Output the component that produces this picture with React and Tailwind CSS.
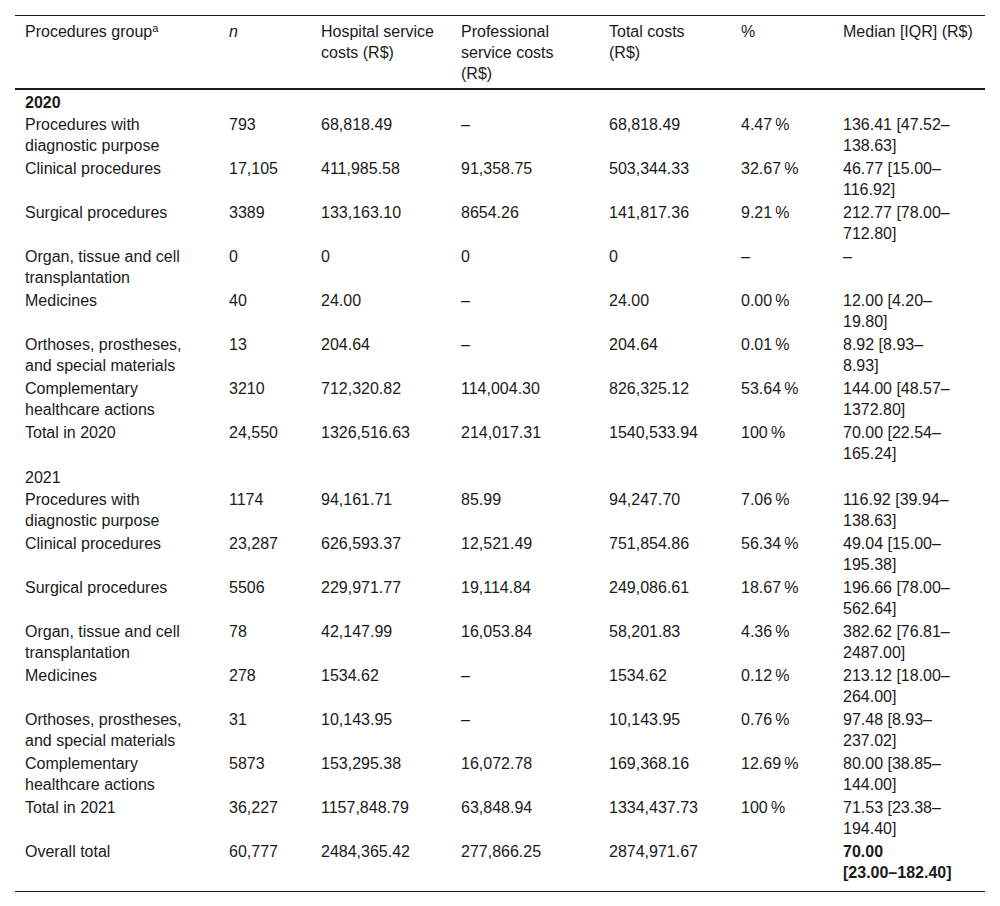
const cols = [
  "w-[204px] pl-[10px] pr-[20px]",
  "w-[92px] pl-[10px] pr-[10px]",
  "w-[140px] pl-[10px] pr-[10px]",
  "w-[148px] pl-[10px] pr-[25px]",
  "w-[132px] pl-[10px] pr-[20px]",
  "w-[103px] pl-[10px] pr-[10px]",
  "w-[151px] pl-[9px] pr-[10px] whitespace-nowrap",
];

const pct = (v) => (v === "–" ? v : `${v}\u2009%`);

// median values break after the dash, like the source table
const Median = ({ value }) => {
  const i = value.indexOf("–");
  if (value === "–" || i < 0) return value;
  return (
    <>
      {value.slice(0, i + 1)}
      <br />
      {value.slice(i + 1)}
    </>
  );
};

// [group, n, hospital, professional, total, %, median]
const rows2020 = [
  ["Procedures with diagnostic purpose", "793", "68,818.49", "–", "68,818.49", "4.47", "136.41 [47.52–138.63]"],
  ["Clinical procedures", "17,105", "411,985.58", "91,358.75", "503,344.33", "32.67", "46.77 [15.00–116.92]"],
  ["Surgical procedures", "3389", "133,163.10", "8654.26", "141,817.36", "9.21", "212.77 [78.00–712.80]"],
  ["Organ, tissue and cell transplantation", "0", "0", "0", "0", "–", "–"],
  ["Medicines", "40", "24.00", "–", "24.00", "0.00", "12.00 [4.20–19.80]"],
  ["Orthoses, prostheses, and special materials", "13", "204.64", "–", "204.64", "0.01", "8.92 [8.93–8.93]"],
  ["Complementary healthcare actions", "3210", "712,320.82", "114,004.30", "826,325.12", "53.64", "144.00 [48.57–1372.80]"],
  ["Total in 2020", "24,550", "1326,516.63", "214,017.31", "1540,533.94", "100", "70.00 [22.54–165.24]"],
];

const rows2021 = [
  ["Procedures with diagnostic purpose", "1174", "94,161.71", "85.99", "94,247.70", "7.06", "116.92 [39.94–138.63]"],
  ["Clinical procedures", "23,287", "626,593.37", "12,521.49", "751,854.86", "56.34", "49.04 [15.00–195.38]"],
  ["Surgical procedures", "5506", "229,971.77", "19,114.84", "249,086.61", "18.67", "196.66 [78.00–562.64]"],
  ["Organ, tissue and cell transplantation", "78", "42,147.99", "16,053.84", "58,201.83", "4.36", "382.62 [76.81–2487.00]"],
  ["Medicines", "278", "1534.62", "–", "1534.62", "0.12", "213.12 [18.00–264.00]"],
  ["Orthoses, prostheses, and special materials", "31", "10,143.95", "–", "10,143.95", "0.76", "97.48 [8.93–237.02]"],
  ["Complementary healthcare actions", "5873", "153,295.38", "16,072.78", "169,368.16", "12.69", "80.00 [38.85–144.00]"],
  ["Total in 2021", "36,227", "1157,848.79", "63,848.94", "1334,437.73", "100", "71.53 [23.38–194.40]"],
];

const DataRow = ({ row }) => (
  <tr>
    {row.map((cell, i) => (
      <td key={i} className={`${cols[i]} py-[1px] align-top`}>
        {i === 5 ? pct(cell) : i === 6 ? <Median value={cell} /> : cell}
      </td>
    ))}
  </tr>
);

const YearRow = ({ label, bold }) => (
  <tr>
    <td colSpan={7} className={`pl-[10px] pt-[2px] pb-0 ${bold ? "font-bold" : ""}`}>
      {label}
    </td>
  </tr>
);

const headers = [
  "Hospital service costs (R$)",
  "Professional service costs (R$)",
  "Total costs (R$)",
  "%",
  "Median [IQR] (R$)",
];

export default function App() {
  return (
    <div
      className="w-[1000px] min-h-[906px] bg-white px-[15px] pt-[15px] text-[16px] leading-[21px] text-[#1a1a1a]"
      style={{ fontFamily: '"Liberation Sans", Arial, sans-serif' }}
    >
      <table className="w-[970px] table-fixed border-collapse border-t border-b border-[#1a1a1a]">
        <colgroup>
          <col className="w-[204px]" />
          <col className="w-[92px]" />
          <col className="w-[140px]" />
          <col className="w-[148px]" />
          <col className="w-[132px]" />
          <col className="w-[103px]" />
          <col className="w-[151px]" />
        </colgroup>
        <thead>
          <tr className="border-b-2 border-[#1a1a1a]">
            <th className={`${cols[0]} pt-[5px] pb-[4px] text-left font-normal align-top`}>
              Procedures group<sup className="text-[11px]">a</sup>
            </th>
            <th className={`${cols[1]} pt-[5px] pb-[4px] text-left font-normal align-top italic`}>n</th>
            {headers.map((h, i) => (
              <th key={h} className={`${cols[i + 2]} pt-[5px] pb-[4px] text-left font-normal align-top whitespace-normal`}>
                {h}
              </th>
            ))}
          </tr>
        </thead>
        <tbody>
          <YearRow label="2020" bold />
          {rows2020.map((r) => (
            <DataRow key={"a" + r[0]} row={r} />
          ))}
          <YearRow label="2021" />
          {rows2021.map((r) => (
            <DataRow key={"b" + r[0]} row={r} />
          ))}
          <tr>
            <td className={`${cols[0]} pt-[1px] pb-[8px] align-top`}>Overall total</td>
            <td className={`${cols[1]} pt-[1px] pb-[8px] align-top`}>60,777</td>
            <td className={`${cols[2]} pt-[1px] pb-[8px] align-top`}>2484,365.42</td>
            <td className={`${cols[3]} pt-[1px] pb-[8px] align-top`}>277,866.25</td>
            <td className={`${cols[4]} pt-[1px] pb-[8px] align-top`}>2874,971.67</td>
            <td className={`${cols[5]} pt-[1px] pb-[8px] align-top`}></td>
            <td className={`${cols[6]} pt-[1px] pb-[8px] align-top font-bold`}>
              70.00
              <br />
              [23.00–182.40]
            </td>
          </tr>
        </tbody>
      </table>
    </div>
  );
}
